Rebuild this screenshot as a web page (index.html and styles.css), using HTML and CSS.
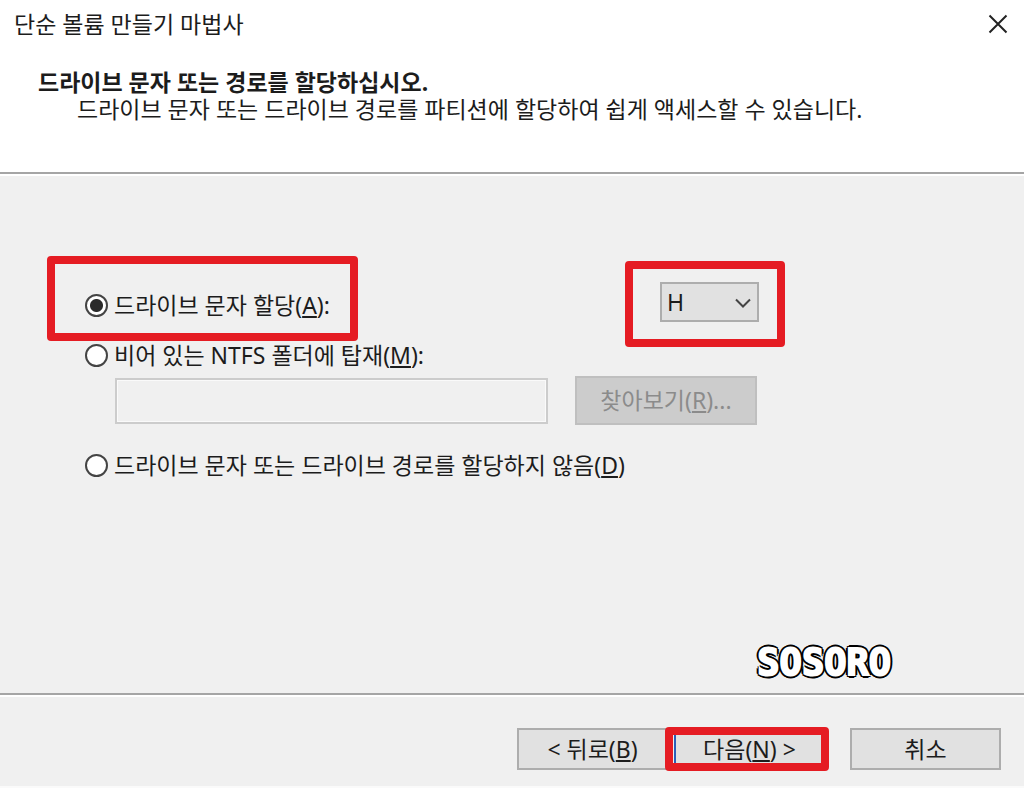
FILE: index.html
```html
<!DOCTYPE html>
<html lang="ko">
<head>
  <meta charset="UTF-8">
  <title>단순 볼륨 만들기 마법사</title>
  <meta name="viewport" content="width=device-width, initial-scale=1">
  <link rel="stylesheet" href="styles.css">
</head>
<body>
  <form class="wizard">
    <header class="top">
      <div class="titlebar">
        <span>단순 볼륨 만들기 마법사</span>
        <button type="button" class="close" aria-label="닫기">
          <svg width="20" height="20" viewBox="0 0 20 20"><path d="M1.5 1.5 18.5 18.5M18.5 1.5 1.5 18.5"/></svg>
        </button>
      </div>
      <div class="heading">
        <h1>드라이브 문자 또는 경로를 할당하십시오.</h1>
        <p>드라이브 문자 또는 드라이브 경로를 파티션에 할당하여 쉽게 액세스할 수 있습니다.</p>
      </div>
    </header>

    <main class="content">
      <div class="options">
        <label class="option option-letter marked mark-letter">
          <input type="radio" name="assign" value="letter" checked>
          <span>드라이브 문자 할당(<u>A</u>):</span>
        </label>
        <div class="drive marked mark-drive">
          <select aria-label="드라이브 문자">
            <option>H</option>
          </select>
          <svg class="chevron" width="16" height="10" viewBox="0 0 16 10"><path d="M1 1.5 8 8.5 15 1.5"/></svg>
        </div>

        <label class="option option-mount">
          <input type="radio" name="assign" value="mount">
          <span>비어 있는 NTFS 폴더에 탑재(<u>M</u>):</span>
        </label>

        <input type="text" class="path" aria-label="폴더 경로" disabled>
        <button type="button" class="btn browse" disabled>찾아보기(<u>R</u>)...</button>

        <label class="option option-none">
          <input type="radio" name="assign" value="none">
          <span>드라이브 문자 또는 드라이브 경로를 할당하지 않음(<u>D</u>)</span>
        </label>
      </div>
      <div class="signature">SOSORO</div>
    </main>

    <footer class="actions">
      <button type="button" class="btn">&lt; 뒤로(<u>B</u>)</button>
      <button type="submit" class="btn next marked mark-next">다음(<u>N</u>) &gt;</button>
      <button type="button" class="btn cancel">취소</button>
    </footer>
  </form>
</body>
</html>
```
FILE: styles.css
```css
:root {
  --bg: #f0f0f0;
  --text: #1c1c1c;
  --line: #a5a5a5;
  --button: #e1e1e1;
  --mark: #e51c23;
}
* { box-sizing: border-box; }
body {
  margin: 0;
  background: #fff;
  color: var(--text);
  font: 23px/27px "Noto Sans", "Noto Sans CJK KR", sans-serif;
}
button, input, select {
  font: inherit;
  color: inherit;
}
u { text-underline-offset: 2px; text-decoration-thickness: 2px; }
.wizard {
  min-height: 100vh;
  display: flex;
  flex-direction: column;
  border-bottom: 2px solid #fafafa;
}
.top {
  padding-bottom: 48px;
  border-bottom: 2px solid var(--line);
}
.titlebar {
  display: flex;
  justify-content: space-between;
  align-items: center;
  height: 48px;
  padding: 0 14px;
}
.close {
  display: flex;
  padding: 2px;
  border: none;
  background: none;
}
.close svg, .chevron {
  fill: none;
  stroke: #222;
  stroke-width: 2;
}
.chevron { stroke: #444; }
.heading {
  padding: 20px 38px 1px;
}
h1 {
  margin: 0;
  font-size: 23px;
  line-height: 28px;
}
.heading p {
  margin: 0;
  padding-left: 39px;
}

.content {
  flex: 1;
  display: flex;
  flex-direction: column;
  padding: 106px 0 12px;
  background: var(--bg);
  border-top: 2px solid #fff;
}
.options {
  display: grid;
  grid-template-columns: minmax(0, 1fr) 184px;
  column-gap: 27px;
  padding: 0 265px 0 85px;
}
.option {
  display: flex;
  align-items: center;
  gap: 6px;
  justify-self: start;
  line-height: 30px;
  white-space: nowrap;
}
.option input {
  appearance: none;
  flex: none;
  width: 23px;
  height: 23px;
  margin: 0;
  border: 2px solid #444;
  border-radius: 50%;
  background: #fff;
}
.option input:checked {
  background: radial-gradient(circle, #2a2a2a 6px, #fff 7px);
}
.option-letter { height: 46px; }
.option-mount, .option-none { grid-column: 1 / -1; }
.option-mount { margin-top: 12px; }
.option-none { margin-top: 25px; }

.drive {
  width: 99px;
  height: 40px;
  justify-self: end;
}
.drive select {
  appearance: none;
  width: 100%;
  height: 100%;
  padding: 0 5px;
  border: 2px solid #adadad;
  border-radius: 0;
  background: var(--button);
}
.chevron {
  position: absolute;
  right: 8px;
  top: 16px;
  pointer-events: none;
}
.path {
  align-self: center;
  height: 46px;
  min-width: 0;
  margin: 6px 0 0 30px;
  padding: 0 8px;
  border: 2px solid #ccc;
  box-shadow: inset 0 0 0 1px #fafafa;
  background: var(--bg);
}
.btn {
  width: 151px;
  height: 42px;
  padding: 0;
  border: 2px solid #adadad;
  background: var(--button);
  white-space: nowrap;
}
.browse {
  width: 182px;
  height: 49px;
  margin-top: 6px;
  border-color: #bfbfbf;
  background: #ccc;
  color: #8b8b8b;
}
.signature {
  align-self: flex-end;
  margin: auto 133px 0 0;
  font: bold 37px/36px "DejaVu Sans Mono", monospace;
  color: #fff;
  -webkit-text-stroke: 2px #fff;
  text-shadow: -3px 0 #000, 3px 0 #000, 0 -3px #000, 0 3px #000,
    -2px -2px #000, 2px -2px #000, -2px 2px #000, 2px 2px #000;
}

.actions {
  display: flex;
  justify-content: flex-end;
  gap: 6px;
  padding: 33px 23px 16px;
  background: var(--bg);
  border-top: 2px solid var(--line);
  box-shadow: inset 0 2px #fff;
}
.next { border-color: #2b5fb8; }
.cancel { margin-left: 19px; }

/* red call-out frames */
.marked { position: relative; }
.marked::after {
  content: "";
  position: absolute;
  border: 8px solid var(--mark);
  border-radius: 4px;
  pointer-events: none;
}
.mark-letter::after { inset: -26px -28px -13px -38px; }
.mark-drive::after { inset: -21px -26px -25px -35px; }
.mark-next::after { inset: -3px -6px -3px -11px; }
```
